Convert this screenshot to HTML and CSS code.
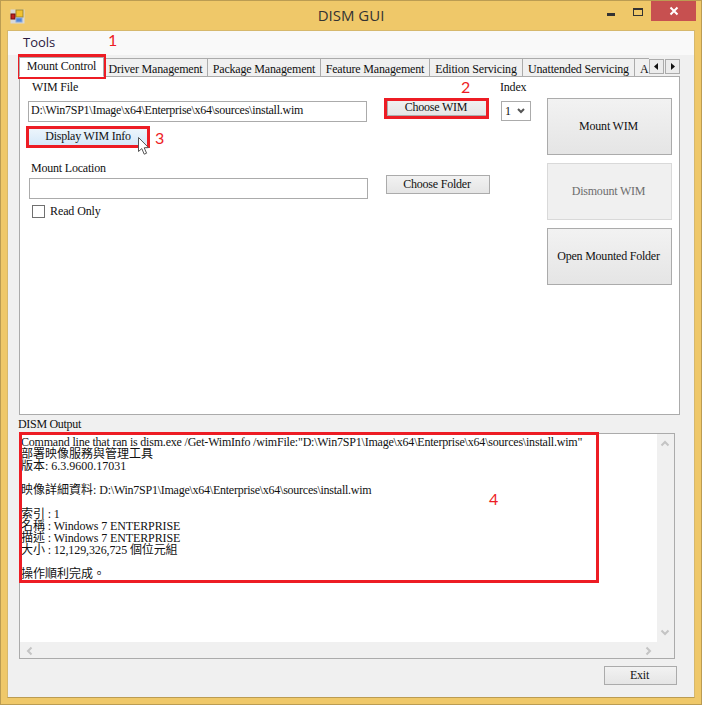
FILE: index.html
```html
<!DOCTYPE html>
<html lang="zh-Hant">
<head>
<meta charset="utf-8">
<title>DISM GUI</title>
<link rel="stylesheet" href="styles.css">
</head>
<body>
<div class="window">
  <header class="titlebar">
    <svg class="app-icon" width="15" height="15" viewBox="0 0 15 15">
      <rect x="0.5" y="0.5" width="14" height="14" fill="#d8d8d8"/>
      <rect x="6" y="1" width="7" height="7" fill="#f2c230" stroke="#a88a20"/>
      <rect x="1" y="5" width="4" height="5" fill="#c22020" stroke="#701010"/>
      <rect x="6" y="9" width="6" height="4" fill="#4f86d8" stroke="#8aa8d8"/>
    </svg>
    <div class="title">DISM GUI</div>
    <div class="caption-buttons">
      <span class="cap-min"></span>
      <span class="cap-max"></span>
      <span class="cap-close">
        <svg width="10" height="10" viewBox="0 0 10 10"><path d="M1.5 1.5 L8.5 8.5 M8.5 1.5 L1.5 8.5" stroke="#fff" stroke-width="2"/></svg>
      </span>
    </div>
  </header>

  <div class="client">
    <nav class="menubar"><span class="menu-item">Tools</span></nav>

    <div class="tabstrip">
      <div class="tab tab-active">Mount Control</div>
      <div class="tab tab-driver">Driver Management</div>
      <div class="tab tab-package">Package Management</div>
      <div class="tab tab-feature">Feature Management</div>
      <div class="tab tab-edition">Edition Servicing</div>
      <div class="tab tab-unattended">Unattended Servicing</div>
      <div class="tab tab-clipped">A</div>
      <div class="tab-scroll">
        <span class="tab-arrow"><svg width="5" height="7" viewBox="0 0 5 7"><path d="M4 0 V7 L0 3.5 Z" fill="#111"/></svg></span>
        <span class="tab-arrow"><svg width="5" height="7" viewBox="0 0 5 7"><path d="M1 0 V7 L5 3.5 Z" fill="#111"/></svg></span>
      </div>
    </div>

    <section class="panel">
      <div class="col-left">
        <div class="label label-wim">WIM File</div>
        <div class="input input-wim"><span class="tight">D:\Win7SP1\Image\x64\Enterprise\x64\sources\install.wim</span></div>
        <button class="btn btn-display">Display WIM Info</button>
        <div class="label label-mount">Mount Location</div>
        <div class="input input-mount"></div>
        <div class="check-row"><span class="checkbox"></span><span>Read Only</span></div>
      </div>
      <div class="col-mid">
        <button class="btn btn-choose">Choose WIM</button>
        <button class="btn btn-folder">Choose Folder</button>
      </div>
      <div class="col-index">
        <div class="label">Index</div>
        <div class="select"><span>1</span>
          <svg width="8" height="6" viewBox="0 0 8 6"><path d="M1 1 L4 4 L7 1" fill="none" stroke="#555" stroke-width="2"/></svg>
        </div>
      </div>
      <div class="col-right">
        <button class="btn btn-big">Mount WIM</button>
        <button class="btn btn-big btn-disabled">Dismount WIM</button>
        <button class="btn btn-big">Open Mounted Folder</button>
      </div>
    </section>

    <div class="output-label">DISM Output</div>
    <section class="output">
      <div class="output-main">
        <div class="output-text">
          <p class="out-group"><span class="tight-line">Command line that ran is dism.exe /Get-WimInfo /wimFile:"D:\Win7SP1\Image\x64\Enterprise\x64\sources\install.wim"</span><br>部署映像服務與管理工具<br>版本: 6.3.9600.17031</p>
          <p class="out-group">映像詳細資料: <span class="tight">D:\Win7SP1\Image\x64\Enterprise\x64\sources\install.wim</span></p>
          <p class="out-group out-info">索引 : 1<br>名稱 : Windows 7 ENTERPRISE<br>描述 : Windows 7 ENTERPRISE<br>大小 : 12,129,326,725 個位元組</p>
          <p class="out-group">操作順利完成。</p>
        </div>
        <div class="vscroll">
          <svg width="10" height="7" viewBox="0 0 10 7"><path d="M1.5 5.5 L5 2 L8.5 5.5" fill="none" stroke="#c4c4c4" stroke-width="2"/></svg>
          <svg width="10" height="7" viewBox="0 0 10 7"><path d="M1.5 1.5 L5 5 L8.5 1.5" fill="none" stroke="#c4c4c4" stroke-width="2"/></svg>
        </div>
      </div>
      <div class="hscroll">
        <svg width="7" height="10" viewBox="0 0 7 10"><path d="M5.5 1.5 L2 5 L5.5 8.5" fill="none" stroke="#c4c4c4" stroke-width="2"/></svg>
        <svg width="7" height="10" viewBox="0 0 7 10"><path d="M1.5 1.5 L5 5 L1.5 8.5" fill="none" stroke="#c4c4c4" stroke-width="2"/></svg>
      </div>
    </section>

    <footer class="footer"><button class="btn btn-exit">Exit</button></footer>
  </div>

  <div class="mark mark-1"></div>
  <div class="mark mark-2"></div>
  <div class="mark mark-3"></div>
  <div class="mark mark-4"></div>
  <span class="num num-1">1</span>
  <span class="num num-2">2</span>
  <span class="num num-3">3</span>
  <span class="num num-4">4</span>
  <svg class="cursor" width="13" height="20" viewBox="0 0 13 20">
    <path d="M1.5 1.5 V15.5 L4.8 12.6 L7.2 18.2 L9.6 17.2 L7.2 11.8 L11.5 11.6 Z" fill="#fff" stroke="#555" stroke-width="1"/>
  </svg>
</div>
</body>
</html>
```
FILE: styles.css
```css
* { box-sizing: border-box; }
html, body { margin: 0; padding: 0; }
body { width: 702px; height: 705px; overflow: hidden; background: #fff; }

.window {
  position: relative;
  width: 702px;
  height: 705px;
  padding: 0 6px 6px;
  background: #efc869;
  border: 1px solid #bb9c52;
  font: 12px/14px "Liberation Serif", "Noto Sans CJK TC", serif;
  color: #111;
}

.tight { letter-spacing: -0.25px; }
.tight-line { letter-spacing: -0.2px; }

.titlebar {
  position: relative;
  height: 29px;
  display: flex;
  align-items: center;
}
.app-icon { margin: 1px 0 0 3px; }
.title {
  position: absolute;
  left: 0; right: 0; top: 5px;
  text-align: center;
  font: 15px/18px "Open Sans", "Noto Sans", sans-serif;
  color: #333;
}
.caption-buttons {
  position: absolute;
  top: 0; right: -1px;
  display: flex;
  align-items: flex-start;
}
.cap-min { width: 8px; height: 3px; margin: 12px 18px 0 0; background: #333; }
.cap-max { width: 10px; height: 8px; margin: 7px 8px 0 0; border: 1px solid #333; border-top-width: 2px; }
.cap-close {
  width: 45px; height: 20px;
  background: #c75050;
  display: flex; align-items: center; justify-content: center;
}

.client {
  width: 688px;
  height: 668px;
  border: 1px solid #d6b86c;
  border-bottom-color: #bb9c52;
  background: #f0f0f0;
}

.menubar {
  height: 24px;
  padding: 3px 0 0 15px;
  background: #f9f9f9;
  font: 13px/16px "Open Sans", "Noto Sans", sans-serif;
  color: #2a1a40;
}

.tabstrip {
  display: flex;
  align-items: flex-end;
  height: 22px;
  margin: 0 0 -1px 11px;
  position: relative;
  width: 661px;
}
.tab {
  height: 18px;
  padding-top: 3px;
  margin-bottom: 1px;
  text-align: center;
  border: 1px solid #ababab;
  border-bottom: 0;
  border-left: 0;
  background: #f0f0f0;
  white-space: nowrap;
  overflow: hidden;
  letter-spacing: -0.17px;
}
.tab-active {
  width: 85px;
  height: 20px;
  margin-bottom: 0;
  padding-top: 1px;
  position: relative;
  z-index: 1;
  background: #fff;
  border-left: 1px solid #ababab;
  border-bottom: 1px solid #fff;
}
.tab-driver { width: 104px; }
.tab-package { width: 113px; }
.tab-feature { width: 109px; }
.tab-edition { width: 93px; }
.tab-unattended { width: 112px; }
.tab-clipped { width: 14px; text-align: left; padding-left: 5px; border-right: 0; }
.tab-scroll { display: flex; gap: 1px; margin-bottom: 3px; }
.tab-arrow {
  width: 15px; height: 15px;
  background: #ececec;
  border: 1px solid #ababab;
  display: flex; align-items: center; justify-content: center;
}

.panel {
  display: flex;
  width: 661px;
  height: 339px;
  margin-left: 11px;
  border: 1px solid #ababab;
  background: #fff;
}
.col-left { width: 366px; padding: 3px 0 0 8px; }
.col-mid { width: 114px; padding-top: 21px; }
.col-index { width: 47px; padding-top: 3px; }
.col-right { padding-top: 21px; display: flex; flex-direction: column; gap: 8px; }

.label { letter-spacing: -0.2px; }
.label-wim { padding-left: 4px; }
.label-mount { margin: 14px 0 0 3px; }

.input {
  height: 21px;
  border: 1px solid #ababab;
  background: #fff;
  padding: 1px 0 0 2px;
  white-space: nowrap;
}
.input-wim { width: 339px; margin-top: 7px; }
.input-mount { width: 339px; margin: 3px 0 0 1px; }

.btn {
  display: block;
  padding: 0 2px 2px 0;
  border: 1px solid #ababab;
  background: linear-gradient(#f2f2f2, #e5e5e5);
  font: inherit;
  letter-spacing: -0.22px;
  color: #111;
  cursor: default;
}
.btn-display {
  width: 120px; height: 19px;
  margin-top: 6px;
  padding: 0 0 3px;
  border-color: #3c7fb1;
  background: linear-gradient(#ecf5fc, #d4e8f9);
}
.btn-choose { width: 100px; height: 19px; margin-left: 1px; border-bottom-width: 2px; padding-bottom: 1px; }
.btn-folder { width: 104px; height: 19px; margin-top: 58px; }
.btn-big { width: 125px; height: 57px; }
.btn-disabled { background: #f0f0f0; border-color: #d9d9d9; color: #6d6d6d; }
.btn-exit { width: 73px; height: 19px; }

.check-row { display: flex; align-items: center; gap: 5px; height: 14px; margin: 5px 0 0 4px; letter-spacing: -0.1px; }
.checkbox { width: 13px; height: 13px; border: 1px solid #707070; background: #fff; }

.select {
  display: flex;
  align-items: center;
  justify-content: space-between;
  width: 30px; height: 20px;
  margin: 7px 0 0 1px;
  padding: 0 5px 0 3px;
  border: 1px solid #ababab;
  background: #fff;
}

.output-label { margin: 2px 0 0 10px; height: 14px; letter-spacing: -0.3px; }
.output {
  width: 656px;
  height: 226px;
  margin: 2px 0 0 11px;
  border: 1px solid #ababab;
  background: #f0f0f0;
}
.output-main { display: flex; height: 208px; }
.output-text {
  flex: 1;
  padding: 2px 0 0 1px;
  background: #fff;
  overflow: hidden;
}
.out-group {
  width: fit-content;
  margin: 0 0 12px;
  line-height: 12px;
  white-space: nowrap;
}
.out-info { letter-spacing: -0.12px; }
.vscroll {
  width: 17px;
  padding: 6px 0 6px 3px;
  display: flex;
  flex-direction: column;
  justify-content: space-between;
}
.hscroll {
  height: 17px;
  padding: 0 22px 0 6px;
  display: flex;
  align-items: center;
  justify-content: space-between;
}

.footer { display: flex; justify-content: flex-end; padding: 7px 17px 0 0; }

.mark { position: absolute; border: 3px solid #ed1c24; pointer-events: none; }
.mark-1 { left: 17px; top: 53px; width: 88px; height: 25px; }
.mark-2 { left: 383px; top: 97px; width: 105px; height: 21px; }
.mark-3 { left: 25px; top: 125px; width: 124px; height: 22px; }
.mark-4 { left: 18px; top: 431px; width: 580px; height: 151px; }

.num { position: absolute; font: 16px/20px "Lato", "Liberation Sans", sans-serif; color: #ed1c24; }
.num-1 { left: 107px; top: 29px; }
.num-2 { left: 460px; top: 76px; }
.num-3 { left: 154px; top: 127px; }
.num-4 { left: 488px; top: 488px; }

.cursor { position: absolute; left: 136px; top: 135px; }
```
